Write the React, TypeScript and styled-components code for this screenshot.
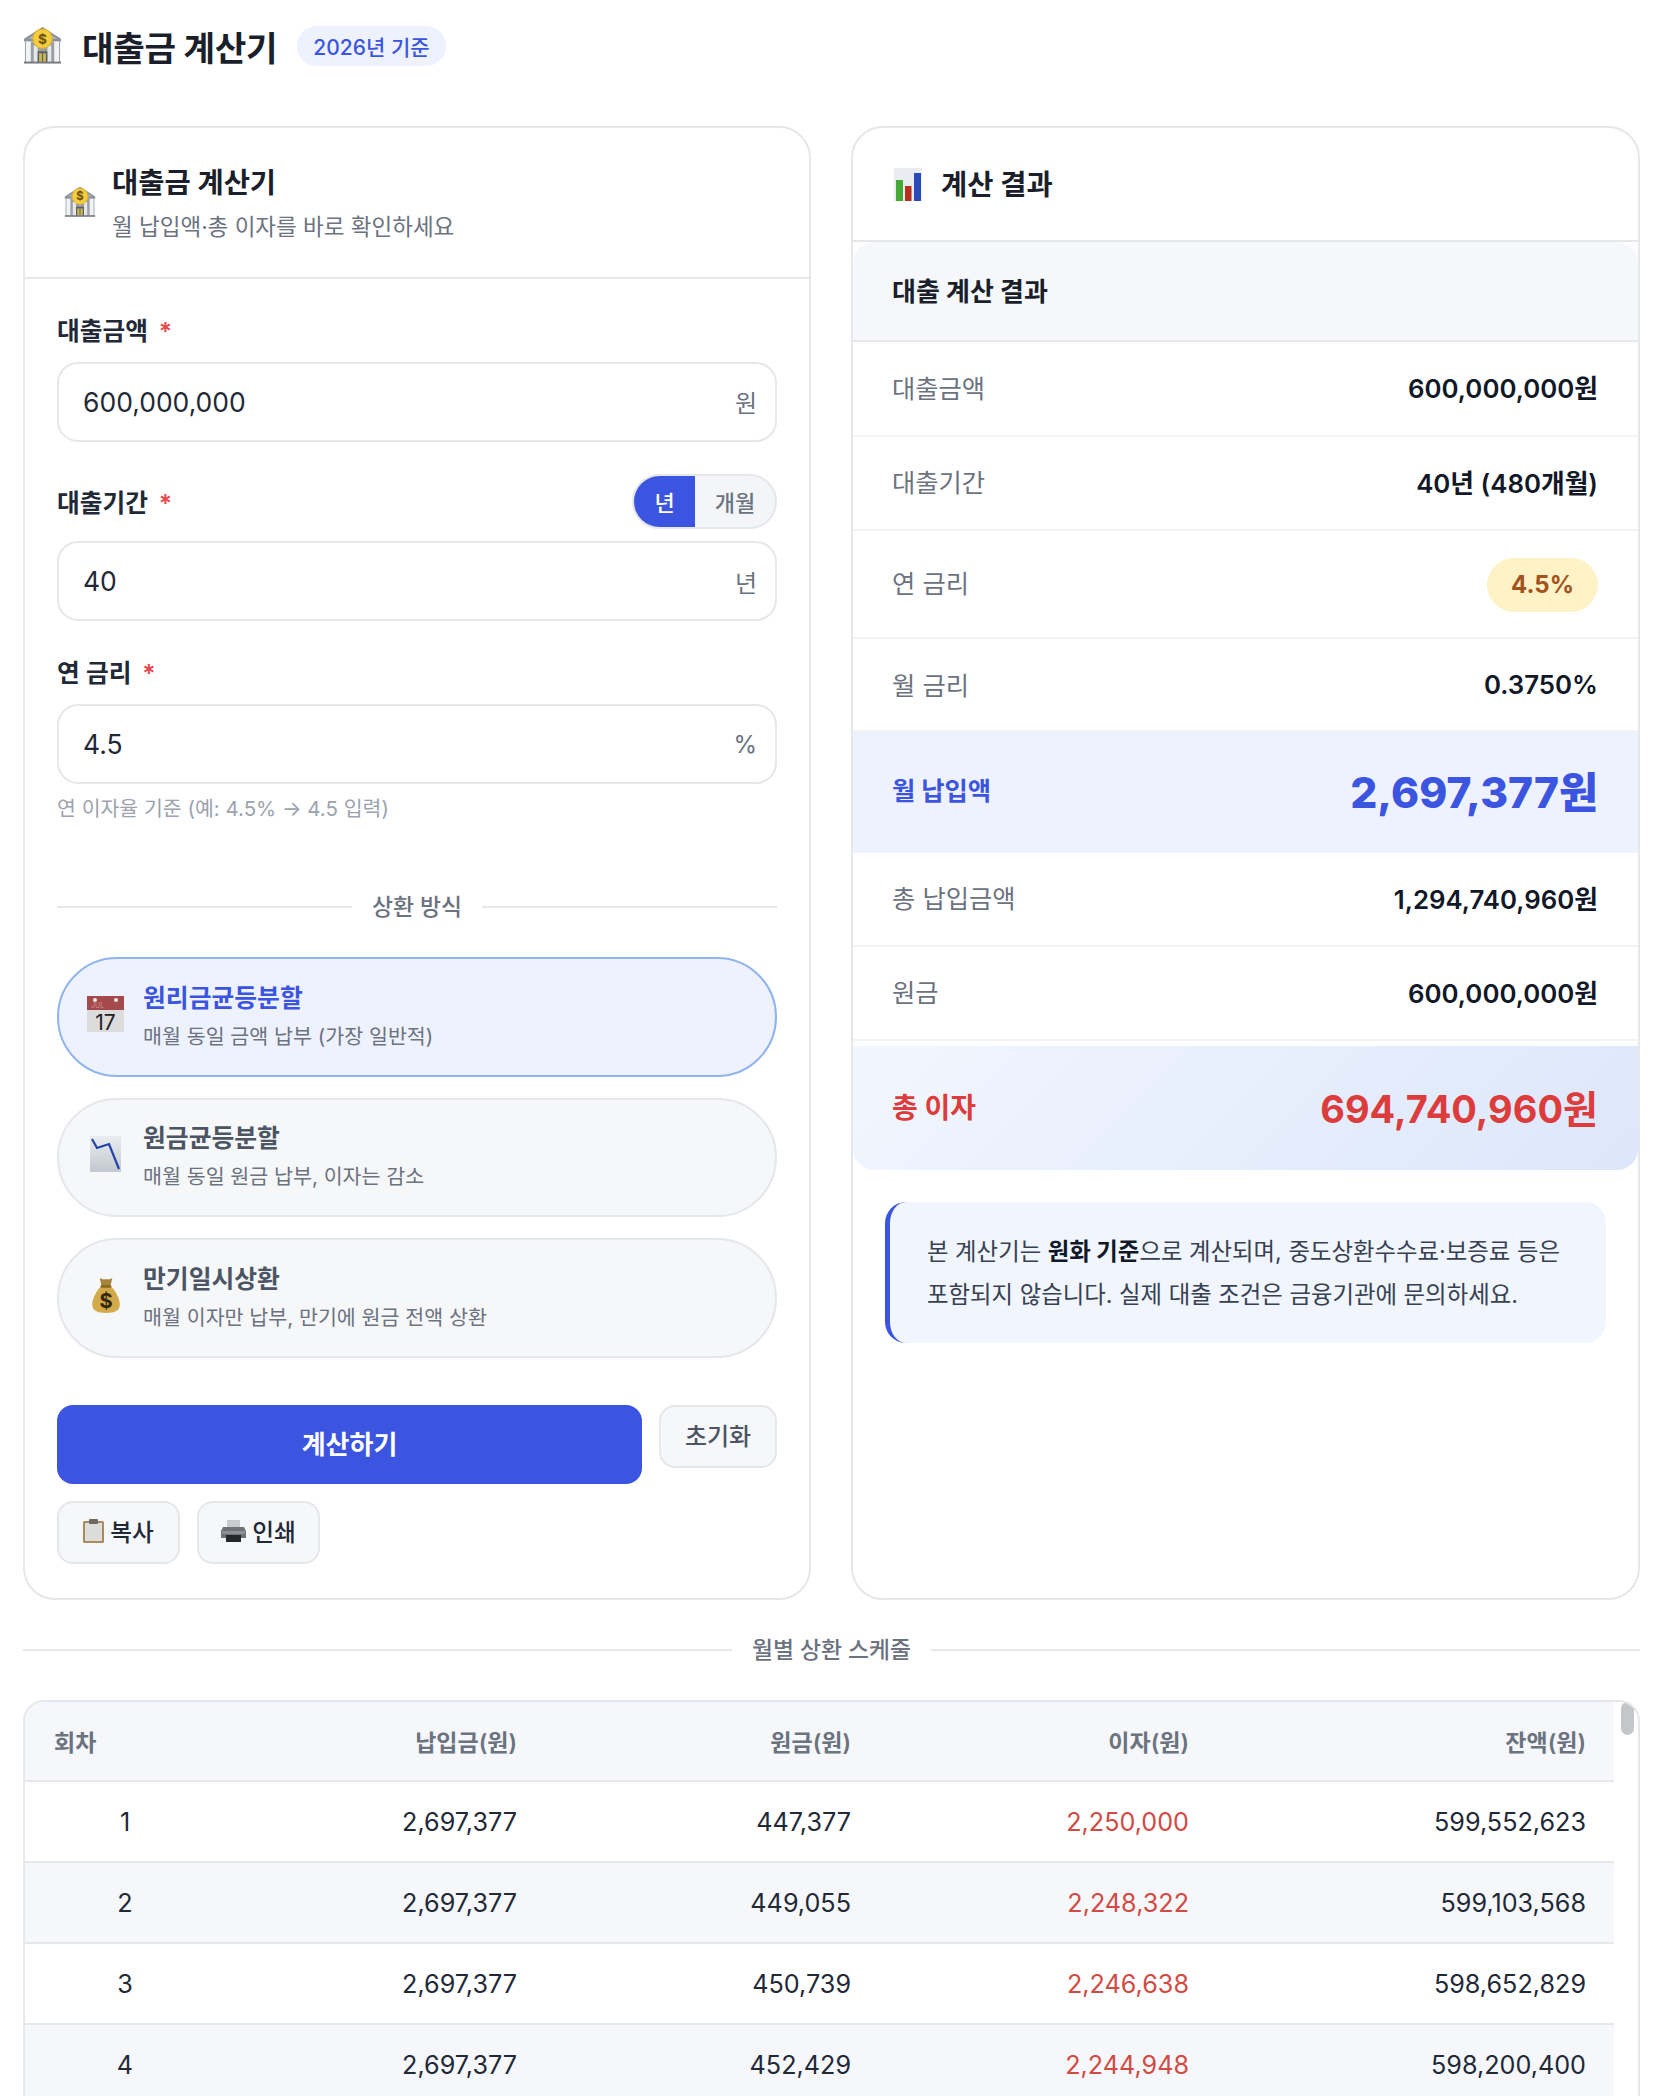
import styled, { createGlobalStyle } from 'styled-components';

const GlobalStyle = createGlobalStyle`
  html, body {
    margin: 0;
    padding: 0;
    height: 2096px;
    overflow: hidden;
    background: #fff;
  }
  body {
    font-family: "Inter", "Noto Sans CJK KR", "Noto Sans", sans-serif;
    color: #111827;
  }
  * { box-sizing: border-box; }
`

const blue = '#3b55e0';
const line = '#e5e7eb';
const muted = '#6b7280';

const Page = styled.div`
  padding: 25.5px 18px 0 23px;
`

const PageHeader = styled.header`
  display: flex;
  align-items: center;
  height: 40px;
  margin-bottom: 60.2px;
`

const PageTitle = styled.h1`
  margin: 0 20px 0 20px;
  font-size: 34.3px;
  font-weight: 700;
  letter-spacing: -0.3px;
  color: #1a1f2b;
`

const YearBadge = styled.span`
  display: flex;
  align-items: center;
  height: 40px;
  padding: 0 16px;
  border-radius: 20px;
  background: #eef2ff;
  color: ${blue};
  font-size: 21px;
  font-weight: 500;
`

const Columns = styled.div`
  display: grid;
  grid-template-columns: 788px 789px;
  gap: 40px;
`

const Card = styled.section`
  display: flex;
  flex-direction: column;
  height: 1474.3px;
  border: 2.67px solid ${line};
  border-radius: 32px;
  background: #fff;
`

const FormHeader = styled.div`
  display: flex;
  align-items: center;
  gap: 16px;
  height: 151.3px;
  padding-left: 39px;
  border-bottom: 2.67px solid ${line};
`

const HeaderText = styled.div`
  display: flex;
  flex-direction: column;
  margin-top: 0;
`

const CardTitle = styled.h2`
  margin: 0;
  font-size: 28.5px;
  line-height: 40px;
  font-weight: 700;
  color: #1a1f2b;
`

const CardSub = styled.p`
  margin: 9.4px 0 0;
  font-size: 22.5px;
  line-height: 30px;
  color: ${muted};
`

const FormBody = styled.div`
  padding: 34px 32px 0;
`

const Field = styled.div<{ $gap: number }>`
  margin-bottom: ${props => props.$gap}px;
`

const LabelRow = styled.div<{ $tall?: boolean }>`
  display: flex;
  align-items: center;
  justify-content: space-between;
  height: ${props => props.$tall ? '55px' : '32px'};
  margin-bottom: ${props => props.$tall ? '12.5px' : '17px'};
`

const Label = styled.label`
  font-size: 24.7px;
  font-weight: 600;
  color: #1f2937;
`

const Required = styled.span`
  margin-left: 11px;
  color: #e5484d;
`

const InputBox = styled.div`
  display: flex;
  align-items: center;
  height: 79.7px;
  padding: 0 18px 0 24px;
  border: 2.67px solid ${line};
  border-radius: 21px;
`

const TextInput = styled.input`
  flex: 1;
  min-width: 0;
  border: 0;
  outline: 0;
  padding: 0;
  background: transparent;
  font-family: inherit;
  font-size: 26.5px;
  color: #1f2937;
`

const Suffix = styled.span`
  font-size: 24px;
  color: ${muted};
`

const Hint = styled.p`
  margin: 10px 0 0;
  font-size: 20.5px;
  line-height: 30px;
  color: #9ca3af;
`

const UnitToggle = styled.div`
  display: flex;
  width: 145px;
  height: 55px;
  border: 2.67px solid ${line};
  border-radius: 28px;
  overflow: hidden;
  background: #f3f5f8;
`

const UnitOption = styled.span<{ $active?: boolean }>`
  display: flex;
  align-items: center;
  justify-content: center;
  flex: ${props => props.$active ? '0 0 61px' : '1'};
  background: ${props => props.$active ? blue : 'transparent'};
  color: ${props => props.$active ? '#fff' : muted};
  font-size: 22px;
  font-weight: 500;
`

const SectionDivider = styled.div`
  display: flex;
  align-items: center;
  gap: 20px;
  font-size: 22.8px;
  line-height: 32px;
  font-weight: 500;
  color: ${muted};
  &::before, &::after {
    content: '';
    flex: 1;
    border-top: 2px solid ${line};
  }
`

const MethodDivider = styled(SectionDivider)`
  margin-top: 67px;
  margin-bottom: 34px;
`

const MethodList = styled.div`
  display: flex;
  flex-direction: column;
  gap: 21px;
`

const MethodOption = styled.div<{ $active?: boolean }>`
  display: flex;
  align-items: center;
  gap: 17px;
  height: 119.5px;
  padding-left: 26px;
  border: 2.67px solid ${props => props.$active ? '#8fb4ee' : line};
  border-radius: 60px;
  background: ${props => props.$active ? '#eef2ff' : '#f6f7f9'};
`

const MethodIcon = styled.div`
  display: flex;
  align-items: center;
  justify-content: center;
  width: 41px;
  padding-bottom: 6px;
`

const MethodText = styled.div`
  display: flex;
  flex-direction: column;
  gap: 7px;
`

const MethodName = styled.div<{ $active?: boolean }>`
  font-size: 24.8px;
  line-height: 33px;
  font-weight: ${props => props.$active ? 700 : 600};
  color: ${props => props.$active ? blue : '#4b5563'};
`

const MethodDesc = styled.div`
  font-size: 20.6px;
  line-height: 30px;
  color: ${muted};
`

const ButtonRow = styled.div`
  display: flex;
  align-items: flex-start;
  gap: 17px;
  margin-top: 47.2px;
`

const PrimaryButton = styled.button`
  flex: 1;
  height: 79.5px;
  padding: 0 0 4px;
  border: 0;
  border-radius: 16px;
  background: ${blue};
  color: #fff;
  font-family: inherit;
  font-size: 26px;
  font-weight: 600;
`

const GhostButton = styled.button`
  display: flex;
  align-items: center;
  justify-content: center;
  gap: 6px;
  height: 63px;
  padding: 0 0 3px;
  border: 2.67px solid ${line};
  border-radius: 16px;
  background: #f6f7f9;
  color: #4b5563;
  font-family: inherit;
  font-size: 24px;
  font-weight: 500;
`

const ResetButton = styled(GhostButton)`
  width: 118px;
`

const ActionRow = styled.div`
  display: flex;
  gap: 17px;
  margin-top: 17px;
`

const ActionButton = styled(GhostButton)`
  width: 123px;
  font-size: 23.7px;
  color: #1f2937;
`

const ResultHeader = styled.div`
  display: flex;
  align-items: center;
  gap: 19px;
  height: 114.3px;
  padding: 1.5px 0 0 41px;
  border-bottom: 2.67px solid ${line};
`

const ResultTitleBar = styled.div`
  display: flex;
  align-items: center;
  height: 100px;
  padding: 0 0 3px 39px;
  background: #f5f7fa;
  border-radius: 21px 21px 0 0;
  border-bottom: 2.67px solid ${line};
  font-size: 26px;
  font-weight: 700;
  color: #1a1f2b;
`

const ResultRow = styled.div<{ $height: number; $lift?: number }>`
  display: flex;
  align-items: center;
  justify-content: space-between;
  height: ${props => props.$height}px;
  padding: 0 40px ${props => props.$lift ?? 3}px 39px;
  border-bottom: 2.67px solid #f1f3f5;
`

const RowLabel = styled.span`
  font-size: 25.3px;
  color: ${muted};
`

const RowValue = styled.span`
  font-size: 25.8px;
  font-weight: 600;
  color: #111827;
`

const RateBadge = styled.span`
  display: flex;
  align-items: center;
  height: 54px;
  margin-top: 5px;
  padding: 0 24px;
  border-radius: 27px;
  background: #fdf3c7;
  color: #a3521e;
  font-size: 24px;
  font-weight: 700;
`

const MonthlyRow = styled.div`
  display: flex;
  align-items: center;
  justify-content: space-between;
  height: 121px;
  padding: 0 40px 6px 39px;
  background: #eef2fe;
`

const MonthlyLabel = styled.span`
  font-size: 25.3px;
  font-weight: 700;
  color: ${blue};
`

const MonthlyValue = styled.span`
  font-size: 42.5px;
  font-weight: 800;
  color: ${blue};
`

const InterestRow = styled.div`
  display: flex;
  align-items: center;
  justify-content: space-between;
  height: 124.5px;
  margin-top: 5px;
  padding: 0 40px 4px 39px;
  border-radius: 0 0 21px 21px;
  background: linear-gradient(135deg, #f2f6fe, #dce7fb);
`

const InterestLabel = styled.span`
  font-size: 28px;
  font-weight: 700;
  color: #dc3c3c;
`

const InterestValue = styled.span`
  font-size: 38px;
  font-weight: 700;
  color: #dc3c3c;
`

const Notice = styled.p`
  margin: 32px 32px 0;
  padding: 27.5px 36px 27.5px 37px;
  border-left: 5px solid ${blue};
  border-radius: 21px;
  background: #f0f5fe;
  font-size: 23.4px;
  line-height: 43px;
  color: #374151;
  strong {
    font-weight: 700;
    color: #111827;
  }
`

const ScheduleDivider = styled(SectionDivider)`
  margin-top: 33.7px;
`

const TableWrap = styled.div`
  position: relative;
  margin-top: 34.7px;
  height: 420px;
  overflow: hidden;
  padding-right: 25px;
  border: 2.67px solid ${line};
  border-radius: 21px 21px 0 0;
`

const ScrollThumb = styled.div`
  position: absolute;
  top: 0;
  right: 4px;
  width: 13px;
  height: 33px;
  border-radius: 7px;
  background: #c4c6c9;
`

const Table = styled.table`
  width: 100%;
  border-collapse: collapse;
  table-layout: fixed;
`

const HeadCell = styled.th<{ $width: number; $left?: boolean }>`
  width: ${props => props.$width}px;
  height: 79px;
  padding: 0 28px 0 29px;
  background: #f5f7fa;
  border-bottom: 2.67px solid ${line};
  text-align: ${props => props.$left ? 'left' : 'right'};
  font-size: 23px;
  font-weight: 600;
  color: ${muted};
`

const BodyRow = styled.tr<{ $even?: boolean }>`
  background: ${props => props.$even ? '#f5f7fa' : '#fff'};
`

const BodyCell = styled.td<{ $center?: boolean; $red?: boolean }>`
  height: 81px;
  padding: 0 28px;
  border-bottom: 2.67px solid ${line};
  text-align: ${props => props.$center ? 'center' : 'right'};
  font-size: 25.2px;
  color: ${props => props.$red ? '#d14a43' : '#1f2937'};
`

function BankIcon({ size }: { size: number }) {
  return (
    <svg width={size} height={size} viewBox="0 0 40 40" style={{ flexShrink: 0 }}>
      <path d="M1 13 20 1l19 12v3H1z" fill="#8d9299" />
      <path d="M5 13 20 4l15 9z" fill="#b4b8bd" />
      <rect x="2" y="16" width="36" height="21" fill="#9a9ea5" />
      <rect x="3" y="16" width="5" height="21" fill="#f1f2f3" />
      <rect x="32" y="16" width="5" height="21" fill="#f1f2f3" />
      <rect x="11" y="20" width="4" height="17" fill="#e6e7e9" />
      <rect x="25" y="20" width="4" height="17" fill="#e6e7e9" />
      <rect x="15" y="26" width="10" height="11" fill="#59605f" />
      <rect x="16.5" y="28" width="3" height="9" fill="#c9b458" />
      <rect x="20.5" y="28" width="3" height="9" fill="#c9b458" />
      <rect x="1" y="36.5" width="38" height="2" fill="#77797e" />
      <circle cx="20" cy="13" r="10" fill="#f2cd3f" stroke="#dca92a" strokeWidth="1" />
      <text x="20" y="18" textAnchor="middle" fontSize="14" fontWeight="700" fill="#6d5410">$</text>
    </svg>
  );
}

function CalendarIcon() {
  return (
    <svg width="37" height="36" viewBox="0 0 37 36">
      <rect y="14" width="37" height="22" fill="#dcdcdc" />
      <rect width="37" height="14" fill="#a54a4c" />
      <circle cx="8" cy="4" r="2" fill="#f5e9e5" />
      <circle cx="29" cy="4" r="2" fill="#f5e9e5" />
      <text x="4" y="12" fontSize="7" fill="#cf8d84">JUL</text>
      <text x="18.5" y="33.5" textAnchor="middle" fontSize="21" fontWeight="400" fill="#222">17</text>
    </svg>
  );
}

function ChartDownIcon() {
  return (
    <svg width="31" height="36" viewBox="0 0 31 36">
      <defs>
        <linearGradient id="chartDownBg" x1="0" y1="0" x2="0" y2="1">
          <stop offset="0" stopColor="#e9edf2" />
          <stop offset="1" stopColor="#c3c8ce" />
        </linearGradient>
      </defs>
      <rect width="31" height="36" fill="url(#chartDownBg)" />
      <path d="M2 3 7 12l12-4 10 25" fill="none" stroke="#2142a8" strokeWidth="2.2" />
    </svg>
  );
}

function MoneyBagIcon() {
  return (
    <svg width="28" height="36" viewBox="0 0 26 34">
      <path d="M7 1c2 1 4 2 6 1 2 1 4 0 6-1l-2 8H9z" fill="#a8843a" />
      <path d="M9 8h8c5 5 9 12 9 18 0 6-5 8-13 8S0 32 0 26C0 20 4 13 9 8z" fill="#d2aa4a" />
      <rect x="8" y="7.5" width="10" height="2.6" rx="1" fill="#8a6a20" />
      <text x="13" y="29" textAnchor="middle" fontSize="19" fontWeight="700" fill="#33270a">$</text>
    </svg>
  );
}

function BarChartIcon() {
  return (
    <svg width="28" height="33" viewBox="0 0 28 33" style={{ flexShrink: 0 }}>
      <rect width="28" height="33" fill="#e9edf1" />
      <rect x="2" y="12" width="7" height="21" fill="#45a935" />
      <rect x="11" y="18" width="6.5" height="15" fill="#b8301f" />
      <rect x="20" y="5" width="7" height="28" fill="#2a4cb8" />
    </svg>
  );
}

function ClipboardIcon() {
  return (
    <svg width="21" height="24" viewBox="0 0 21 24">
      <rect y="2" width="21" height="22" rx="1.5" fill="#a98a5c" />
      <rect x="2" y="4" width="17" height="18" fill="#dcdcda" />
      <rect x="6" y="0" width="9" height="5" rx="1" fill="#70695f" />
    </svg>
  );
}

function PrinterIcon() {
  return (
    <svg width="25" height="22" viewBox="0 0 25 22">
      <rect x="6" y="0" width="13" height="8" fill="#c9cccf" />
      <path d="M2 7h21l2 4v7H0v-7z" fill="#6f7378" />
      <rect x="1" y="11" width="23" height="3" fill="#8d9196" />
      <rect x="5" y="15" width="15" height="7" fill="#25272a" />
    </svg>
  );
}

const scheduleRows = [
  ['1', '2,697,377', '447,377', '2,250,000', '599,552,623'],
  ['2', '2,697,377', '449,055', '2,248,322', '599,103,568'],
  ['3', '2,697,377', '450,739', '2,246,638', '598,652,829'],
  ['4', '2,697,377', '452,429', '2,244,948', '598,200,400'],
];

const methods = [
  { name: '원리금균등분할', desc: '매월 동일 금액 납부 (가장 일반적)', icon: <CalendarIcon />, active: true },
  { name: '원금균등분할', desc: '매월 동일 원금 납부, 이자는 감소', icon: <ChartDownIcon />, active: false },
  { name: '만기일시상환', desc: '매월 이자만 납부, 만기에 원금 전액 상환', icon: <MoneyBagIcon />, active: false },
];

function App() {
  return (
    <Page>
      <GlobalStyle />
      <PageHeader>
        <BankIcon size={39} />
        <PageTitle>대출금 계산기</PageTitle>
        <YearBadge>2026년 기준</YearBadge>
      </PageHeader>

      <Columns>
        <Card>
          <FormHeader>
            <BankIcon size={32} />
            <HeaderText>
              <CardTitle>대출금 계산기</CardTitle>
              <CardSub>월 납입액·총 이자를 바로 확인하세요</CardSub>
            </HeaderText>
          </FormHeader>
          <FormBody>
            <Field $gap={32}>
              <LabelRow>
                <Label>대출금액<Required>*</Required></Label>
              </LabelRow>
              <InputBox>
                <TextInput defaultValue="600,000,000" />
                <Suffix>원</Suffix>
              </InputBox>
            </Field>
            <Field $gap={34.5}>
              <LabelRow $tall>
                <Label>대출기간<Required>*</Required></Label>
                <UnitToggle>
                  <UnitOption $active>년</UnitOption>
                  <UnitOption>개월</UnitOption>
                </UnitToggle>
              </LabelRow>
              <InputBox>
                <TextInput defaultValue="40" />
                <Suffix>년</Suffix>
              </InputBox>
            </Field>
            <LabelRow>
              <Label>연 금리<Required>*</Required></Label>
            </LabelRow>
            <InputBox>
              <TextInput defaultValue="4.5" />
              <Suffix>%</Suffix>
            </InputBox>
            <Hint>연 이자율 기준 (예: 4.5% → 4.5 입력)</Hint>

            <MethodDivider>상환 방식</MethodDivider>
            <MethodList>
              {methods.map((method) => (
                <MethodOption key={method.name} $active={method.active}>
                  <MethodIcon>{method.icon}</MethodIcon>
                  <MethodText>
                    <MethodName $active={method.active}>{method.name}</MethodName>
                    <MethodDesc>{method.desc}</MethodDesc>
                  </MethodText>
                </MethodOption>
              ))}
            </MethodList>

            <ButtonRow>
              <PrimaryButton>계산하기</PrimaryButton>
              <ResetButton>초기화</ResetButton>
            </ButtonRow>
            <ActionRow>
              <ActionButton><ClipboardIcon />복사</ActionButton>
              <ActionButton><PrinterIcon />인쇄</ActionButton>
            </ActionRow>
          </FormBody>
        </Card>

        <Card>
          <ResultHeader>
            <BarChartIcon />
            <CardTitle>계산 결과</CardTitle>
          </ResultHeader>
          <ResultTitleBar>대출 계산 결과</ResultTitleBar>
          <ResultRow $height={95}>
            <RowLabel>대출금액</RowLabel>
            <RowValue>600,000,000원</RowValue>
          </ResultRow>
          <ResultRow $height={94}>
            <RowLabel>대출기간</RowLabel>
            <RowValue>40년 (480개월)</RowValue>
          </ResultRow>
          <ResultRow $height={108}>
            <RowLabel>연 금리</RowLabel>
            <RateBadge>4.5%</RateBadge>
          </ResultRow>
          <ResultRow $height={93} $lift={0}>
            <RowLabel>월 금리</RowLabel>
            <RowValue>0.3750%</RowValue>
          </ResultRow>
          <MonthlyRow>
            <MonthlyLabel>월 납입액</MonthlyLabel>
            <MonthlyValue>2,697,377원</MonthlyValue>
          </MonthlyRow>
          <ResultRow $height={94}>
            <RowLabel>총 납입금액</RowLabel>
            <RowValue>1,294,740,960원</RowValue>
          </ResultRow>
          <ResultRow $height={94}>
            <RowLabel>원금</RowLabel>
            <RowValue>600,000,000원</RowValue>
          </ResultRow>
          <InterestRow>
            <InterestLabel>총 이자</InterestLabel>
            <InterestValue>694,740,960원</InterestValue>
          </InterestRow>
          <Notice>
            본 계산기는 <strong>원화 기준</strong>으로 계산되며, 중도상환수수료·보증료 등은
            포함되지 않습니다. 실제 대출 조건은 금융기관에 문의하세요.
          </Notice>
        </Card>
      </Columns>

      <ScheduleDivider>월별 상환 스케줄</ScheduleDivider>
      <TableWrap>
        <ScrollThumb />
        <Table>
          <thead>
            <tr>
              <HeadCell $width={200} $left>회차</HeadCell>
              <HeadCell $width={320}>납입금(원)</HeadCell>
              <HeadCell $width={334}>원금(원)</HeadCell>
              <HeadCell $width={338}>이자(원)</HeadCell>
              <HeadCell $width={397}>잔액(원)</HeadCell>
            </tr>
          </thead>
          <tbody>
            {scheduleRows.map((row, index) => (
              <BodyRow key={row[0]} $even={index % 2 === 1}>
                <BodyCell $center>{row[0]}</BodyCell>
                <BodyCell>{row[1]}</BodyCell>
                <BodyCell>{row[2]}</BodyCell>
                <BodyCell $red>{row[3]}</BodyCell>
                <BodyCell>{row[4]}</BodyCell>
              </BodyRow>
            ))}
          </tbody>
        </Table>
      </TableWrap>
    </Page>
  );
}

export default App;
